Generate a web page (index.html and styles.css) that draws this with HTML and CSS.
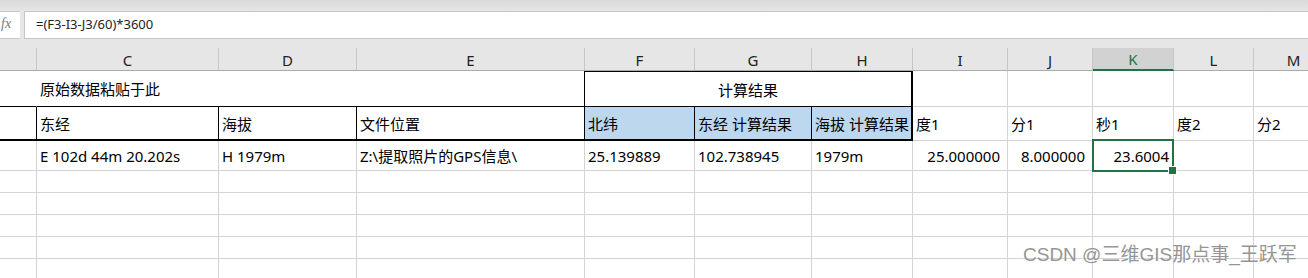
FILE: index.html
```html
<!DOCTYPE html>
<html lang="zh-CN">
<head>
    <meta charset="UTF-8" />
    <title>GPS</title>
    <link rel="stylesheet" href="styles.css">
</head>
<body>
<div class="topbar"></div>
<div class="formula">
    <div class="fx">fx</div>
    <div class="input">=(F3-I3-J3/60)*3600</div>
</div>
<div class="gap"></div>

<div class="sheet">
    <!-- column headers -->
    <div class="h"></div>
    <div class="h">C</div>
    <div class="h">D</div>
    <div class="h">E</div>
    <div class="h">F</div>
    <div class="h">G</div>
    <div class="h">H</div>
    <div class="h">I</div>
    <div class="h">J</div>
    <div class="h hk">K</div>
    <div class="h">L</div>
    <div class="h">M</div>

    <!-- row 1 -->
    <div class="c bb nr"></div>
    <div class="c bb br span3">原始数据粘贴于此</div>
    <div class="c bb bt thick span3 mid">计算结果</div>
    <div class="c"></div>
    <div class="c"></div>
    <div class="c"></div>
    <div class="c"></div>
    <div class="c"></div>

    <!-- row 2 -->
    <div class="c bb2 br"></div>
    <div class="c bb2 br">东经</div>
    <div class="c bb2 br">海拔</div>
    <div class="c bb2 br">文件位置</div>
    <div class="c bb2 br blue">北纬</div>
    <div class="c bb2 br blue">东经 计算结果</div>
    <div class="c bb2 thick blue">海拔 计算结果</div>
    <div class="c">度1</div>
    <div class="c">分1</div>
    <div class="c">秒1</div>
    <div class="c">度2</div>
    <div class="c">分2</div>

    <!-- row 3 -->
    <div class="c"></div>
    <div class="c">E 102d 44m 20.202s</div>
    <div class="c">H 1979m</div>
    <div class="c">Z:\提取照片的GPS信息\</div>
    <div class="c">25.139889</div>
    <div class="c">102.738945</div>
    <div class="c">1979m</div>
    <div class="c num">25.000000</div>
    <div class="c num">8.000000</div>
    <div class="c num sel">23.6004</div>
    <div class="c"></div>
    <div class="c"></div>

    <!-- empty rows -->
    <div class="c"></div><div class="c"></div><div class="c"></div><div class="c"></div><div class="c"></div><div class="c"></div>
    <div class="c"></div><div class="c"></div><div class="c"></div><div class="c"></div><div class="c"></div><div class="c"></div>
    <div class="c"></div><div class="c"></div><div class="c"></div><div class="c"></div><div class="c"></div><div class="c"></div>
    <div class="c"></div><div class="c"></div><div class="c"></div><div class="c"></div><div class="c"></div><div class="c"></div>
    <div class="c"></div><div class="c"></div><div class="c"></div><div class="c"></div><div class="c"></div><div class="c"></div>
    <div class="c"></div><div class="c"></div><div class="c"></div><div class="c"></div><div class="c"></div><div class="c"></div>
    <div class="c"></div><div class="c"></div><div class="c"></div><div class="c"></div><div class="c"></div><div class="c"></div>
    <div class="c"></div><div class="c"></div><div class="c"></div><div class="c"></div><div class="c"></div><div class="c"></div>
    <div class="c"></div><div class="c"></div><div class="c"></div><div class="c"></div><div class="c"></div><div class="c"></div>
    <div class="c"></div><div class="c"></div><div class="c"></div><div class="c"></div><div class="c"></div><div class="c"></div>
</div>

<div class="wm">CSDN @三维GIS那点事_王跃军</div>
</body>
</html>
```

FILE: styles.css
```css
* {
    box-sizing: border-box;
}
body {
    margin: 0;
    width: 1308px;
    height: 278px;
    overflow: hidden;
    position: relative;
    background: #fff;
    font-family: "Noto Sans", "Noto Sans CJK SC", sans-serif;
    font-size: 15px;
    color: #000;
}
.topbar {
    height: 11px;
    background: linear-gradient(#d9d9d9, #e6e6e6);
}
.formula {
    display: flex;
    height: 28px;
    background: #e6e6e6;
}
.fx {
    width: 20px;
    background: #fff;
    border-top: 1px solid #c6c6c6;
    border-bottom: 1px solid #c6c6c6;
    color: #7a7a7a;
    font: italic 14px "Liberation Serif", serif;
    line-height: 24px;
    padding-left: 1px;
    margin-right: 4px;
}
.input {
    flex: 1;
    background: #fff;
    border: 1px solid #c6c6c6;
    border-right: 0;
    padding-left: 11px;
    font-size: 13px;
    line-height: 25px;
    color: #222;
}
.gap {
    height: 9px;
    background: #e6e6e6;
}
.sheet {
    display: grid;
    grid-template-columns: 37px 182px 138px 228px 110px 117px 101px 95px 85px 81px 80px 80px;
    grid-template-rows: 23px 36px 34px 30px repeat(5, 22px);
    overflow: hidden;
}
.h {
    background: #e6e6e6;
    border-right: 1px solid #c6c6c6;
    border-bottom: 1px solid #ababab;
    display: flex;
    align-items: center;
    justify-content: center;
    color: #222;
    padding-top: 1px;
}
.hk {
    background: #d2d2d2;
    color: #217346;
    border-bottom: 2px solid #217346;
}
.c {
    border-right: 1px solid #d4d4d4;
    border-bottom: 1px solid #d4d4d4;
    display: flex;
    align-items: center;
    padding: 0 3px;
    white-space: nowrap;
    overflow: hidden;
}
.span3 {
    grid-column: span 3;
}
.mid {
    justify-content: center;
}
.nr {
    border-right-color: #fff;
}
.bb {
    border-bottom-color: #000;
}
.bb2 {
    border-bottom: 2px solid #000;
}
.br {
    border-right-color: #000;
}
.bt {
    border-top: 1px solid #000;
}
.thick {
    border-right: 2px solid #000;
}
.blue {
    background: #bdd7ee;
}
.num {
    justify-content: flex-end;
    padding-right: 7px;
}
.sel {
    position: relative;
    overflow: visible;
    padding-right: 4px;
}
.sel::after {
    content: "";
    position: absolute;
    left: -1px;
    top: -2px;
    right: -1px;
    bottom: -2px;
    border: 2px solid #217346;
}
.sel::before {
    content: "";
    position: absolute;
    right: -4px;
    bottom: -5px;
    width: 7px;
    height: 7px;
    background: #217346;
    border: 1px solid #fff;
    z-index: 2;
}
.wm {
    position: absolute;
    left: 1023px;
    top: 244px;
    font-family: "Liberation Sans", "Noto Sans CJK SC", sans-serif;
    font-size: 19px;
    line-height: 22px;
    color: #959595;
}
```
